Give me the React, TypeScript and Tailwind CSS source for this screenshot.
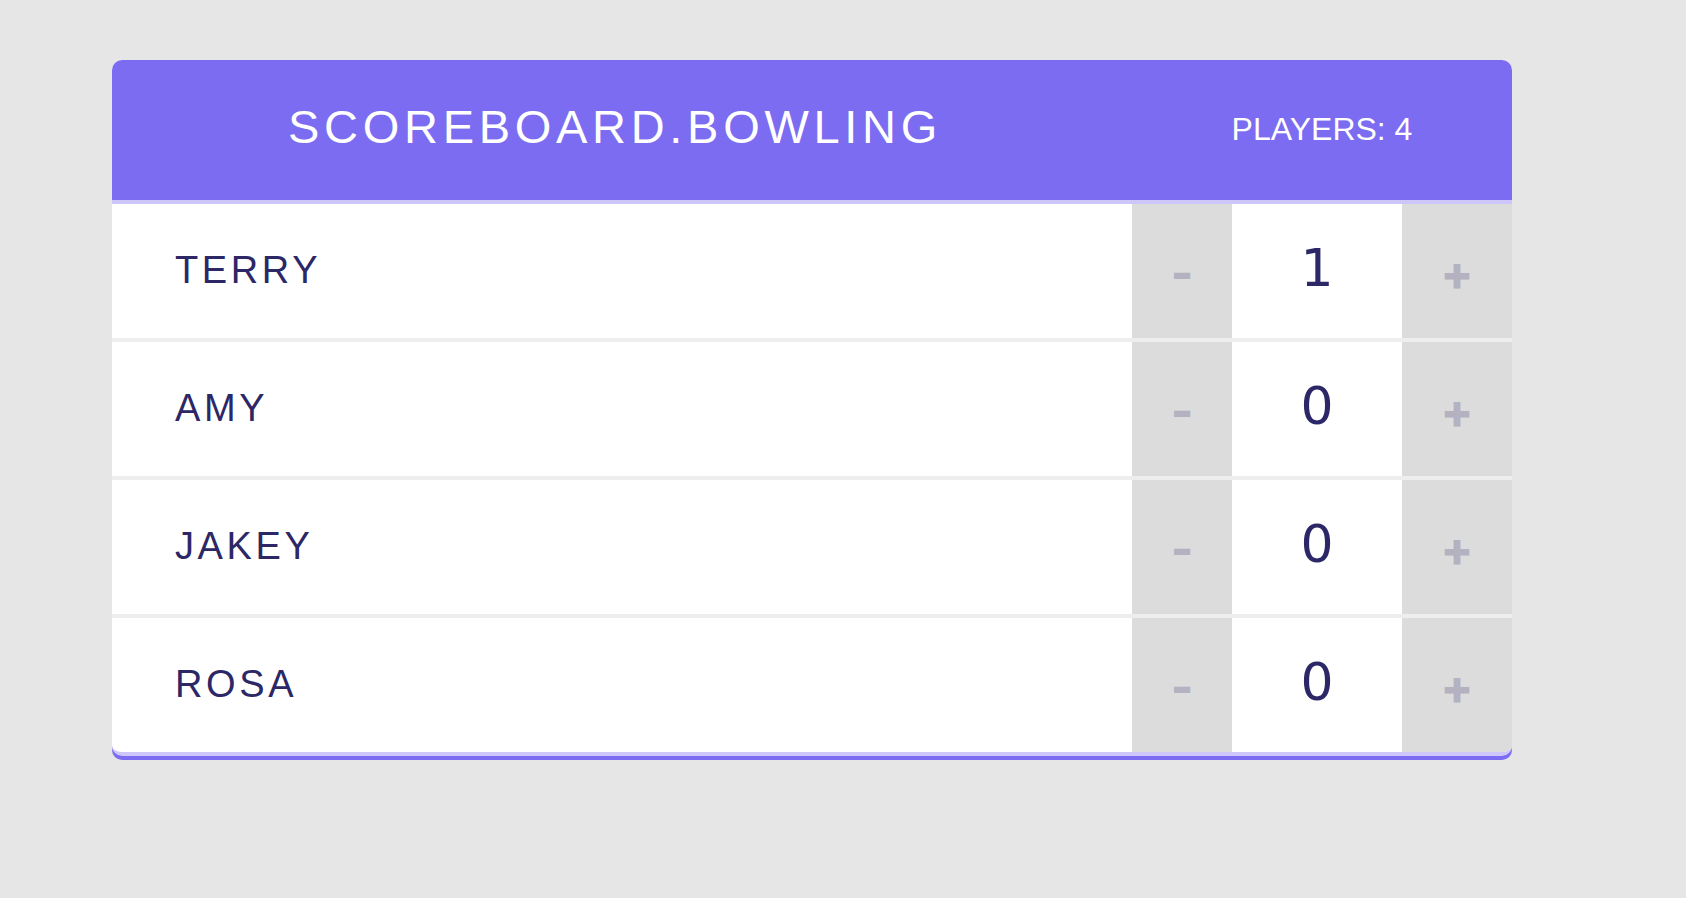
import React from "react";

const players = [
  { name: "TERRY", score: 1 },
  { name: "AMY", score: 0 },
  { name: "JAKEY", score: 0 },
  { name: "ROSA", score: 0 },
];

export default function App() {
  return (
    <div className="min-h-[898px] w-full bg-[#e6e6e6] pt-[60px] pl-[112px]" style={{ fontFamily: '"Liberation Sans", Arial, sans-serif' }}>
      <div className="w-[1400px] overflow-hidden rounded-[10px] border-b-4 border-[#cdc6fb] bg-white shadow-[0_4px_0_#7b6cf2]">
        <div className="flex h-[144px] items-center border-b-4 border-[#cdc6fb] bg-[#7b6cf2] text-white">
          <div className="flex flex-1 justify-center pr-[14px] pb-[7px]">
            <h1 className="text-[47px] font-normal tracking-[0.1em] leading-none">SCOREBOARD.BOWLING</h1>
          </div>
          <div className="flex w-[380px] justify-center pb-[3px]">
            <span className="text-[32px] leading-none">PLAYERS: 4</span>
          </div>
        </div>
        <div className="flex flex-col divide-y-4 divide-[#eeeeee]">
          {players.map((p) => (
            <div key={p.name} className="flex h-[134px] box-content">
              <div className="flex flex-1 items-center pl-[63px] pb-[3px] text-[38px] tracking-[3.6px] text-[#2c2766] leading-none">
                {p.name}
              </div>
              <button className="flex w-[100px] items-center justify-center bg-[#dcdcdc] pt-[4px] text-[48px] font-extrabold text-[#b4b2c1] leading-none" style={{ fontFamily: 'Inter, sans-serif' }}>
                -
              </button>
              <div className="flex w-[170px] items-center justify-center pb-[6px] text-[52px] text-[#2c2766] leading-none" style={{ fontFamily: '"DejaVu Sans", sans-serif' }}>
                {p.score}
              </div>
              <button className="flex w-[110px] items-center justify-center bg-[#dcdcdc] pt-[4px] text-[48px] font-extrabold text-[#b4b2c1] leading-none" style={{ fontFamily: 'Inter, sans-serif' }}>
                +
              </button>
            </div>
          ))}
        </div>
      </div>
    </div>
  );
}
